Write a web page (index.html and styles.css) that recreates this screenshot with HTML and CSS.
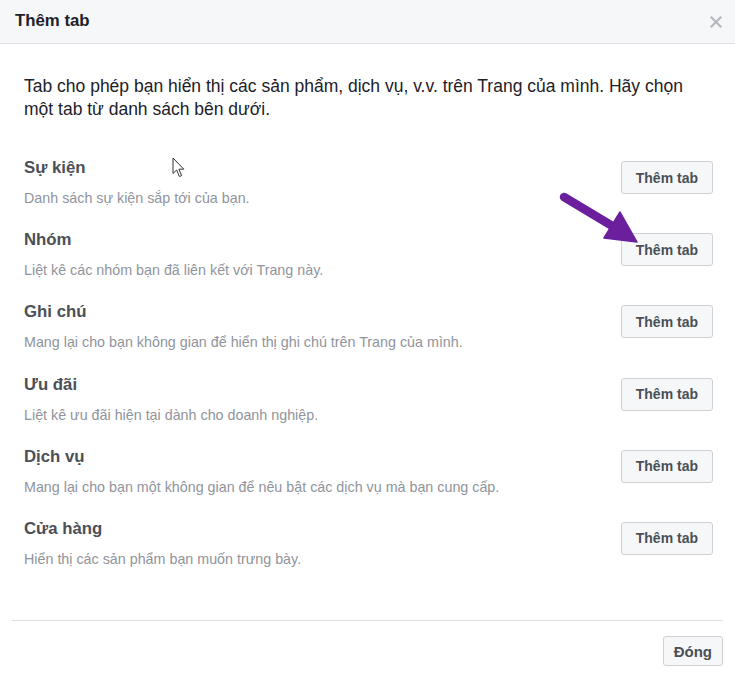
FILE: index.html
```html
<!DOCTYPE html>
<html lang="vi">
<head>
<meta charset="utf-8">
<title>Thêm tab</title>
<link rel="stylesheet" href="styles.css">
</head>
<body>
<div class="dialog">
  <header class="dlg-head">
    <h1 class="dlg-title">Thêm tab</h1>
    <button class="close" aria-label="Đóng">
      <svg width="12" height="12" viewBox="0 0 12 12"><path d="M1.5 1.5 L10.5 10.5 M10.5 1.5 L1.5 10.5" stroke="#b4b8bf" stroke-width="2.2" stroke-linecap="square"/></svg>
    </button>
  </header>
  <div class="dlg-body">
    <p class="intro">Tab cho phép bạn hiển thị các sản phẩm, dịch vụ, v.v. trên Trang của mình. Hãy chọn một tab từ danh sách bên dưới.</p>
    <ul class="tab-list">
      <li class="tab-row">
        <div class="tab-info"><div class="tab-name">Sự kiện</div><div class="tab-desc">Danh sách sự kiện sắp tới của bạn.</div></div>
        <button class="btn btn-add">Thêm tab</button>
      </li>
      <li class="tab-row">
        <div class="tab-info"><div class="tab-name">Nhóm</div><div class="tab-desc">Liệt kê các nhóm bạn đã liên kết với Trang này.</div></div>
        <button class="btn btn-add">Thêm tab</button>
      </li>
      <li class="tab-row">
        <div class="tab-info"><div class="tab-name">Ghi chú</div><div class="tab-desc">Mang lại cho bạn không gian để hiển thị ghi chú trên Trang của mình.</div></div>
        <button class="btn btn-add">Thêm tab</button>
      </li>
      <li class="tab-row">
        <div class="tab-info"><div class="tab-name">Ưu đãi</div><div class="tab-desc">Liệt kê ưu đãi hiện tại dành cho doanh nghiệp.</div></div>
        <button class="btn btn-add">Thêm tab</button>
      </li>
      <li class="tab-row">
        <div class="tab-info"><div class="tab-name">Dịch vụ</div><div class="tab-desc">Mang lại cho bạn một không gian để nêu bật các dịch vụ mà bạn cung cấp.</div></div>
        <button class="btn btn-add">Thêm tab</button>
      </li>
      <li class="tab-row">
        <div class="tab-info"><div class="tab-name">Cửa hàng</div><div class="tab-desc">Hiển thị các sản phẩm bạn muốn trưng bày.</div></div>
        <button class="btn btn-add">Thêm tab</button>
      </li>
    </ul>
  </div>
  <hr class="sep">
  <footer class="dlg-foot">
    <button class="btn btn-close">Đóng</button>
  </footer>

  <svg class="annot-arrow" width="735" height="676" viewBox="0 0 735 676" aria-hidden="true">
    <line x1="564" y1="197" x2="614" y2="227" stroke="#6c1f9c" stroke-width="8.5" stroke-linecap="round"/>
    <polygon points="604,238 620,212 637,242" fill="#6c1f9c" stroke="#6c1f9c" stroke-width="1.5" stroke-linejoin="round"/>
  </svg>
  <svg class="cursor" width="14" height="21" viewBox="0 0 14 21" aria-hidden="true">
    <path d="M1 1 L1 16.5 L4.6 13 L7.4 19.5 L9.6 18.6 L6.9 12.2 L11.8 12.2 Z" fill="#fff" stroke="#333" stroke-width="1" stroke-linejoin="miter"/>
  </svg>
</div>
</body>
</html>
```

FILE: styles.css
```css
* { box-sizing: border-box; }

html, body {
  margin: 0;
  padding: 0;
  background: #fff;
}

body {
  font-family: "Liberation Sans", Arial, sans-serif;
  color: #1d2129;
}

.dialog {
  position: relative;
  width: 735px;
  height: 676px;
  background: #fff;
  display: flex;
  flex-direction: column;
}

.dlg-head {
  height: 44px;
  background: #f6f7f9;
  border-bottom: 1px solid #dddfe2;
  display: flex;
  align-items: center;
  justify-content: space-between;
  padding: 0 12px 0 15px;
}

.dlg-title {
  margin: 0;
  font-size: 16.8px;
  font-weight: bold;
  color: #1d2129;
  line-height: 20px;
  padding-bottom: 1px;
}

.close {
  border: 0;
  background: transparent;
  padding: 0;
  width: 14px;
  height: 14px;
  display: flex;
  align-items: center;
  justify-content: center;
  margin-top: 1px;
}

.dlg-body {
  padding: 31px 22px 0 24px;
  flex: 1;
}

.intro {
  margin: 0 0 37px;
  font-size: 17.5px;
  line-height: 23px;
  color: #1d2129;
  padding-right: 10px;
}

.tab-list {
  list-style: none;
  margin: 0;
  padding: 0;
  display: flex;
  flex-direction: column;
  gap: 23.2px;
}

.tab-row {
  display: flex;
  align-items: flex-start;
  justify-content: space-between;
}

.tab-name {
  font-size: 16.8px;
  font-weight: bold;
  line-height: 20px;
  color: #4b4f56;
}

.tab-desc {
  margin-top: 11px;
  font-size: 14.3px;
  line-height: 18px;
  color: #90949c;
}

.btn {
  font-family: "Liberation Sans", Arial, sans-serif;
  font-weight: bold;
  color: #4b4f56;
  background: #f6f7f9;
  border: 1px solid #ced0d4;
  border-radius: 3px;
  display: inline-flex;
  align-items: center;
  justify-content: center;
  cursor: pointer;
}

.btn-add {
  margin-top: 3px;
  height: 33px;
  padding: 0 14px;
  font-size: 14px;
}

.sep {
  margin: 0 12px;
  border: 0;
  border-top: 1px solid #dddfe2;
  height: 0;
}

.dlg-foot {
  display: flex;
  justify-content: flex-end;
  padding: 15px 12px 10px;
  height: 55px;
}

.btn-close {
  height: 30px;
  padding: 0 10px;
  font-size: 15px;
}

.annot-arrow {
  position: absolute;
  left: 0;
  top: 0;
  pointer-events: none;
}

.cursor {
  position: absolute;
  left: 172px;
  top: 157px;
  pointer-events: none;
}
```
